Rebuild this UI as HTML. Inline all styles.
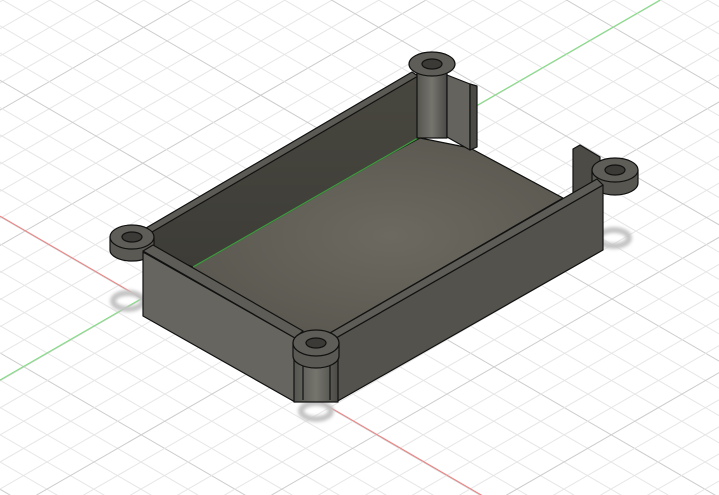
<!DOCTYPE html>
<html><head><meta charset="utf-8"><style>
html,body{margin:0;padding:0;background:#fff;overflow:hidden;width:719px;height:495px}
svg{display:block}
</style></head><body>
<svg id="s" width="719" height="495" viewBox="0 0 719 495" xmlns="http://www.w3.org/2000/svg">
<defs>
<linearGradient id="cyl" x1="0" x2="1" y1="0" y2="0">
<stop offset="0" stop-color="#55544f"/><stop offset="0.5" stop-color="#75746d"/><stop offset="1" stop-color="#4a4945"/></linearGradient>
<linearGradient id="back" x1="0" x2="0" y1="0" y2="1">
<stop offset="0" stop-color="#48473f"/><stop offset="1" stop-color="#3d3c37"/></linearGradient>
<radialGradient id="floor" cx="0.55" cy="0.5" r="0.6">
<stop offset="0" stop-color="#6c6a60"/><stop offset="1" stop-color="#58564e"/></radialGradient>
<filter id="bl" x="-50%" y="-50%" width="200%" height="200%"><feGaussianBlur stdDeviation="1.6"/></filter>
</defs>
<g id="grid"></g>
<line x1="0" y1="216" x2="483" y2="496" stroke="#f08080" stroke-width="1"/>
<line x1="0" y1="380" x2="660" y2="0" stroke="#7ee07e" stroke-width="1"/>
<!-- shadows -->
<g fill="none" stroke="#c4c4c4" stroke-width="6" filter="url(#bl)">
<ellipse cx="128" cy="301" rx="15" ry="8"/>
<ellipse cx="316" cy="411" rx="15" ry="8"/>
<ellipse cx="614" cy="238" rx="15" ry="8"/>
</g>
<g stroke="#111" stroke-width="1.2" stroke-linejoin="round">
<polygon points="180,268 420,138 470,148 563,198 330,333 300,333" fill="url(#floor)"/>
<polygon points="150,229 417,74 418,138 193,267 150,250" fill="url(#back)"/>
<line x1="193" y1="267" x2="418" y2="138" stroke="#3f9a3f" stroke-width="1.3"/>
<polygon points="146,228 412,72 418,76 152,232" fill="#5b5a54"/>
<rect x="417" y="64" width="30" height="74" fill="url(#cyl)"/>
<polygon points="447,75 470,84 470,150 447,137" fill="#64635d"/>
<polygon points="470,84 477,86 477,147 470,150" fill="#4b4a45"/>
<ellipse cx="432" cy="64" rx="23" ry="12" fill="#5e5d57"/>
<ellipse cx="432" cy="64" rx="10" ry="5" fill="#3b3a36"/>
<polygon points="573,149 580,145 600,157 600,180 573,193" fill="#4c4b46"/>
<path d="M592,170 L592,183 A23,12 0 0 0 638,183 L638,170 Z" fill="#575650"/>
<ellipse cx="615" cy="170" rx="23" ry="12" fill="#5e5d57"/>
<ellipse cx="615" cy="170" rx="10" ry="5" fill="#3b3a36"/>
<path d="M110,237 L110,250 A22,11 0 0 0 154,250 L154,237 Z" fill="#5a5953"/>
<ellipse cx="132" cy="237" rx="22" ry="12" fill="#5e5d57"/>
<ellipse cx="132" cy="237" rx="10" ry="5" fill="#3b3a36"/>
<polygon points="143,252 295,338 295,402 143,316" fill="#666560"/>
<polygon points="143,251 153,245 303,331 295,338" fill="#5d5c56"/>
<polygon points="336,338 603,185 603,250 336,402" fill="#53524c"/>
<polygon points="330,333 597,179 603,185 336,338" fill="#5d5c56"/>
<rect x="294" y="350" width="44" height="52" fill="url(#cyl)"/>
<line x1="303" y1="360" x2="303" y2="400"/>
<line x1="330" y1="360" x2="330" y2="400"/>
<path d="M293,343 L293,356 A23,12 0 0 0 339,356 L339,343 Z" fill="#5a5953"/>
<ellipse cx="316" cy="343" rx="23" ry="13" fill="#5e5d57"/>
<ellipse cx="316" cy="343" rx="10" ry="5" fill="#3b3a36"/>
</g>
</svg>
<script>
(function(){
var g=document.getElementById('grid'),s='';
var ox=142,oy=299,sp=47;
function ln(x1,y1,x2,y2,c){s+='<line x1="'+x1+'" y1="'+y1+'" x2="'+x2+'" y2="'+y2+'" stroke="'+c+'" stroke-width="1"/>';}
for(var k=-30;k<=30;k++){
 var c=(k%5==0)?'#cdcdcd':'#e6e6e6';
 var x0=ox+k*sp;
 ln(x0-900,oy-900*0.58,x0+900,oy+900*0.58,c);
 ln(x0-900,oy+900*0.576,x0+900,oy-900*0.576,c);
}
g.innerHTML=s;
})();
</script>
</body></html>
